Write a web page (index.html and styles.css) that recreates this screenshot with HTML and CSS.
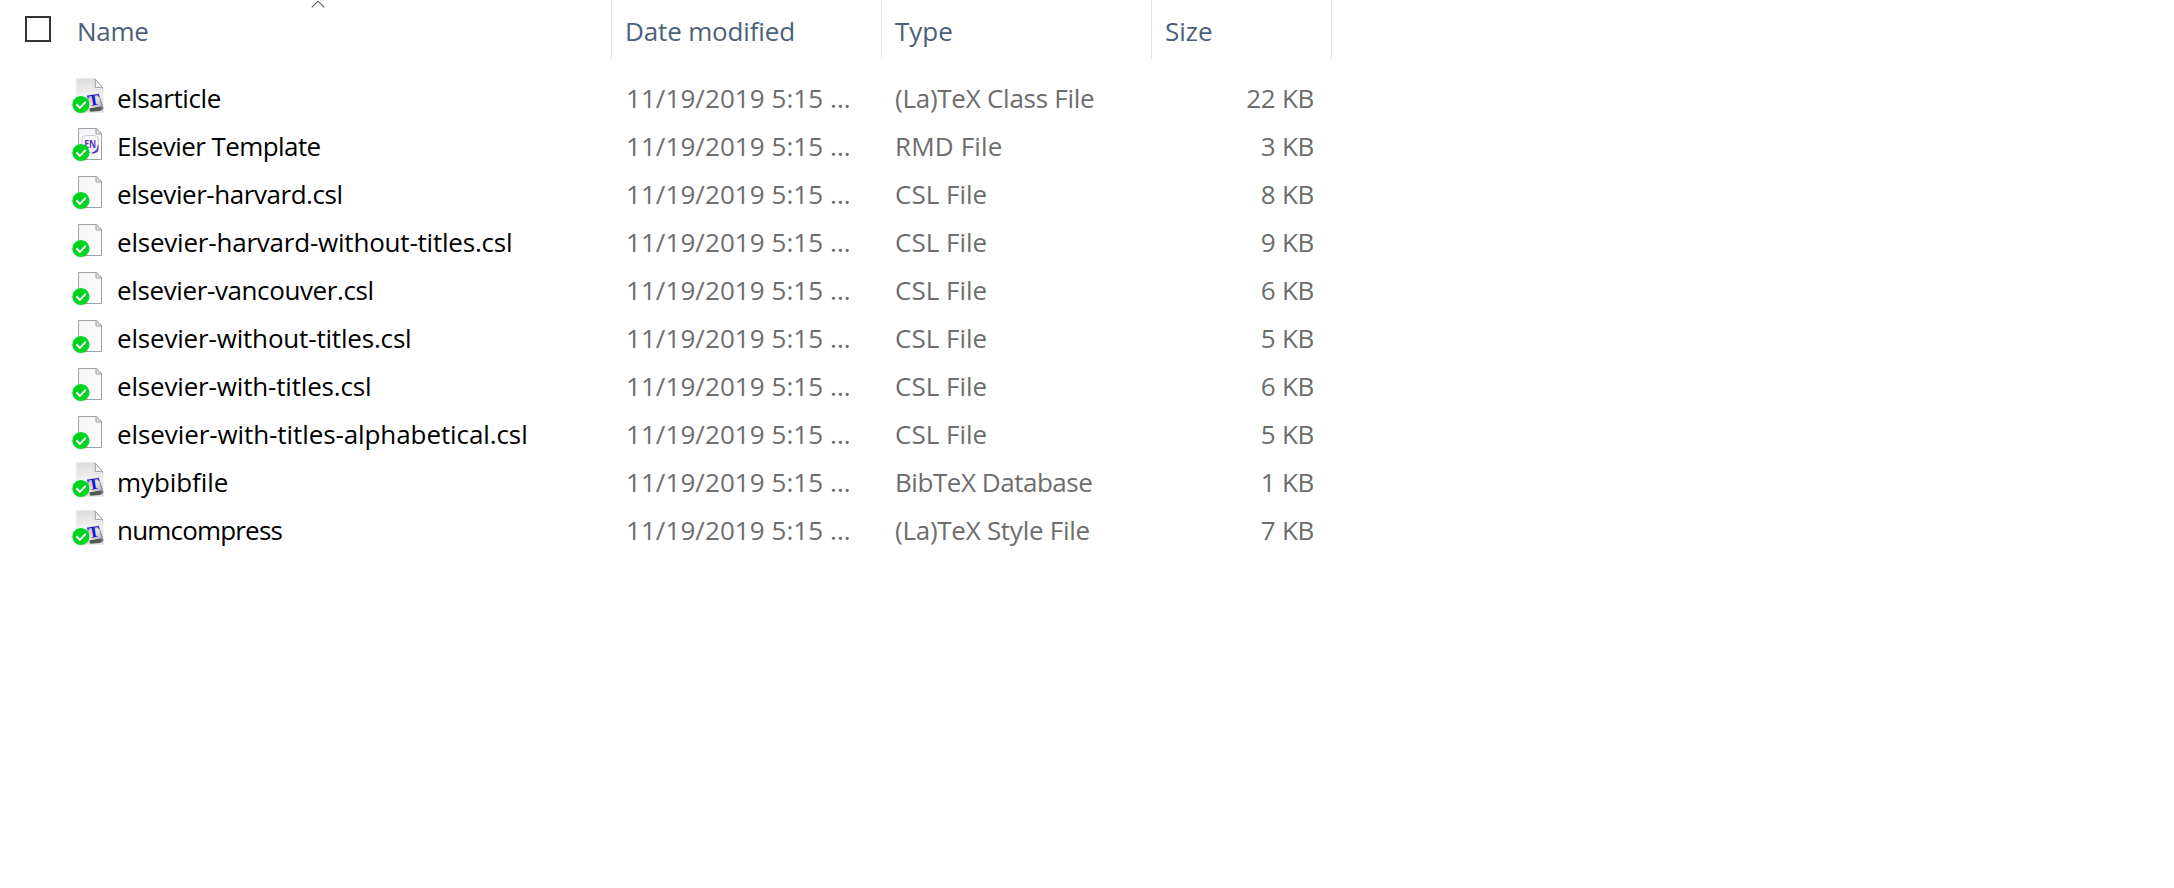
FILE: index.html
```html
<!DOCTYPE html>
<html lang="en">
<head>
<meta charset="utf-8">
<title>Files</title>
<link rel="stylesheet" href="styles.css">
</head>
<body>
<svg class="defs" width="0" height="0">
  <defs>
    <linearGradient id="paper" x1="0" y1="0" x2="1" y2="1"><stop offset="0" stop-color="#f3f4f5"/><stop offset="1" stop-color="#fcfcfd"/></linearGradient>
    <linearGradient id="grey" x1="0" y1="0" x2="0" y2="1"><stop offset="0" stop-color="#dcdcdc"/><stop offset=".5" stop-color="#f1f1f1"/><stop offset="1" stop-color="#d6d6d6"/></linearGradient>
    <linearGradient id="key" x1="0" y1="0" x2="1" y2="1"><stop offset="0" stop-color="#a0a0a0"/><stop offset=".5" stop-color="#e4e4e4"/><stop offset="1" stop-color="#b0b0b0"/></linearGradient>
    <symbol id="badge" viewBox="0 0 40 48">
      <circle cx="10.9" cy="29.5" r="8.6" fill="#00d420"/>
      <path d="M6.3 29.3l3.6 3.5 5.8-6" fill="none" stroke="#fff" stroke-width="1.9"/>
    </symbol>
    <symbol id="page" viewBox="0 0 40 48">
      <path d="M8.500 5.500h18l5 5v26h-23z" fill="url(#paper)" stroke="#a0a0a0"/>
      <path d="M26 5.500v5.500h5.500z" fill="#e6e6e6" stroke="#a0a0a0"/>
    </symbol>
    <symbol id="csl" viewBox="0 0 40 48"><use href="#page"/><use href="#badge"/></symbol>
    <symbol id="rmd" viewBox="0 0 40 48">
      <use href="#page"/>
      <rect x="12" y="12.500" width="16.500" height="17" rx="4" fill="#f8f7fb" stroke="#d0ced8"/>
      <path d="M28 22q.3 5-6 8.200q6 .1 6-4z" fill="#5a2fb5" stroke="#5a2fb5" stroke-width=".6"/>
      <text x="14.200" y="24.600" textLength="12" lengthAdjust="spacingAndGlyphs" class="en">EN</text>
      <use href="#badge"/>
    </symbol>
    <symbol id="tex" viewBox="0 0 40 48">
      <path d="M6.700 3.700h18.300l8 9v24.500h-26.300z" fill="url(#grey)" stroke="#dedede" stroke-width=".6"/>
      <path d="M25 4q1 4 0 8.500 4-.5 8 .5z" fill="#f8f8f8" stroke="#999" stroke-width=".9"/>
      <path d="M19 33.500l12.500-2.800 2 2.500-3 2.500-10 1z" fill="#555"/>
      <path d="M28.500 18l5 14.500-2.500 1-3-15z" fill="#888"/>
      <path d="M17 20.300l11-2 3.700 12.700-12.700 2.500z" fill="url(#key)"/>
      <text transform="translate(18.600 31.200) rotate(-9) scale(1.150 1)" class="tee">T</text>
      <use href="#badge"/>
    </symbol>
  </defs>
</svg>
<main class="list">
  <header class="head">
    <div class="col name"><span class="check"></span><span class="h-name">Name</span>
      <svg class="sort" width="14" height="8" viewBox="0 0 14 8"><path d="M.8 7.300L7 1.200l6.200 6.100" fill="none" stroke="#555" stroke-width="1.100"/></svg></div>
    <div class="col"><span class="h-date">Date modified</span></div>
    <div class="col"><span class="h-type">Type</span></div>
    <div class="col"><span class="h-size">Size</span></div>
  </header>
  <div class="row"><svg class="icon"><use href="#tex"/></svg><span class="name n1">elsarticle</span><span class="date">11/19/2019 5:15 ...</span><span class="type t1">(La)TeX Class File</span><span class="size">22 KB</span></div>
  <div class="row"><svg class="icon"><use href="#rmd"/></svg><span class="name n2">Elsevier Template</span><span class="date">11/19/2019 5:15 ...</span><span class="type t2">RMD File</span><span class="size">3 KB</span></div>
  <div class="row"><svg class="icon"><use href="#csl"/></svg><span class="name n3">elsevier-harvard.csl</span><span class="date">11/19/2019 5:15 ...</span><span class="type">CSL File</span><span class="size">8 KB</span></div>
  <div class="row"><svg class="icon"><use href="#csl"/></svg><span class="name n4">elsevier-harvard-without-titles.csl</span><span class="date">11/19/2019 5:15 ...</span><span class="type">CSL File</span><span class="size">9 KB</span></div>
  <div class="row"><svg class="icon"><use href="#csl"/></svg><span class="name n5">elsevier-vancouver.csl</span><span class="date">11/19/2019 5:15 ...</span><span class="type">CSL File</span><span class="size">6 KB</span></div>
  <div class="row"><svg class="icon"><use href="#csl"/></svg><span class="name n6">elsevier-without-titles.csl</span><span class="date">11/19/2019 5:15 ...</span><span class="type">CSL File</span><span class="size">5 KB</span></div>
  <div class="row"><svg class="icon"><use href="#csl"/></svg><span class="name n7">elsevier-with-titles.csl</span><span class="date">11/19/2019 5:15 ...</span><span class="type">CSL File</span><span class="size">6 KB</span></div>
  <div class="row"><svg class="icon"><use href="#csl"/></svg><span class="name n8">elsevier-with-titles-alphabetical.csl</span><span class="date">11/19/2019 5:15 ...</span><span class="type">CSL File</span><span class="size">5 KB</span></div>
  <div class="row"><svg class="icon"><use href="#tex"/></svg><span class="name n9">mybibfile</span><span class="date">11/19/2019 5:15 ...</span><span class="type t4">BibTeX Database</span><span class="size">1 KB</span></div>
  <div class="row"><svg class="icon"><use href="#tex"/></svg><span class="name n10">numcompress</span><span class="date">11/19/2019 5:15 ...</span><span class="type t5">(La)TeX Style File</span><span class="size">7 KB</span></div>
</main>
</body>
</html>
```
FILE: styles.css
```css
body { margin: 0; background: #fff; font-family: "Open Sans", "Noto Sans", sans-serif; font-size: 26px; line-height: 36px; }
.defs { position: absolute; }
.list { width: 1332px; }
.head { display: grid; grid-template-columns: 612px 270px 270px 180px; height: 75px; color: #4c607a; }
.col { box-sizing: border-box; height: 59px; border-right: 1px solid #e2e2e2; padding: 13px 0 0 13px; white-space: nowrap; }
.col.name { display: flex; align-items: flex-start; padding-left: 25px; position: relative; }
.check { box-sizing: border-box; width: 26px; height: 26px; margin: 3px 26px 0 0; border: 2px solid #333; }
.sort { position: absolute; left: 311px; top: 0; }
.h-name { letter-spacing: -.3px; }
.h-date { letter-spacing: -.15px; }
.row { display: grid; grid-template-columns: 40px 510px 269px 270px 155px; height: 48px; padding-left: 70px; color: #6d6d6d; white-space: nowrap; line-height: 47px; }
.row .name { color: #000; padding-left: 7px; }
.row .date { padding-left: 6px; letter-spacing: .07px; }
.row .type { padding-left: 6px; }
.row .size { text-align: right; letter-spacing: -.3px; }
.icon { width: 40px; height: 48px; display: block; }
.n1 { letter-spacing: -.42px; }
.n2 { letter-spacing: -.57px; }
.n3 { letter-spacing: -.45px; }
.n4 { letter-spacing: -.21px; }
.n5 { letter-spacing: -.38px; }
.n6 { letter-spacing: -.18px; }
.n7 { letter-spacing: -.17px; }
.n8 { letter-spacing: -.09px; }
.n9 { letter-spacing: -.08px; }
.n10 { letter-spacing: -.82px; }
.t1 { letter-spacing: -.26px; }
.t2 { letter-spacing: .15px; }
.t4 { letter-spacing: -.46px; }
.t5 { letter-spacing: -.27px; }
.en { font: bold 10.5px "Open Sans", sans-serif; fill: #5a2fc5; }
.tee { font: bold 16px "Liberation Serif", serif; fill: #1717dd; }
```
